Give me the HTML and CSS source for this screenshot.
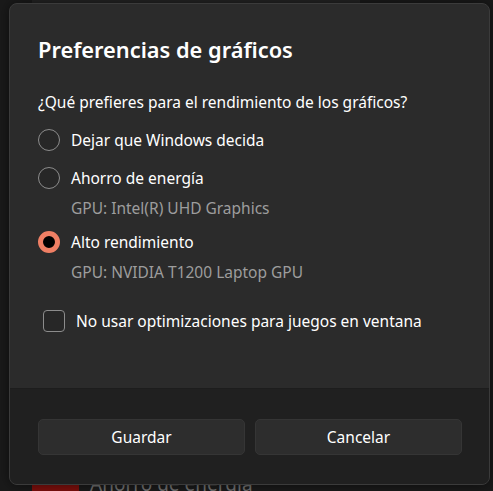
FILE: index.html
```html
<!DOCTYPE html>
<html lang="es">
<head>
  <meta charset="UTF-8">
  <title>Preferencias de gráficos</title>
  <link rel="stylesheet" href="styles.css">
</head>
<body>

  <div class="page">
    <div class="page-card"></div>
    <div class="page-row">
      <span class="app-icon"></span>
      <span class="page-row-text">Ahorro de energía</span>
    </div>
  </div>

  <div class="dialog">
    <div class="dialog-body">
      <h2 class="dialog-title">Preferencias de gráficos</h2>
      <p class="question">¿Qué prefieres para el rendimiento de los gráficos?</p>

      <form class="options">
        <label class="option">
          <input type="radio" name="gpu" value="auto">
          <span class="radio"></span>
          <span>Dejar que Windows decida</span>
        </label>
        <label class="option">
          <input type="radio" name="gpu" value="power">
          <span class="radio"></span>
          <span>Ahorro de energía</span>
        </label>
        <div class="note">GPU: Intel(R) UHD Graphics</div>
        <label class="option">
          <input type="radio" name="gpu" value="high" checked>
          <span class="radio"></span>
          <span>Alto rendimiento</span>
        </label>
        <div class="note">GPU: NVIDIA T1200 Laptop GPU</div>

        <label class="check">
          <input type="checkbox" name="windowed">
          <span class="box"></span>
          <span>No usar optimizaciones para juegos en ventana</span>
        </label>
      </form>
    </div>

    <div class="dialog-footer">
      <button type="button">Guardar</button>
      <button type="button">Cancelar</button>
    </div>
  </div>

</body>
</html>
```

FILE: styles.css
```css
body {
  margin: 0;
  font-family: 'Noto Sans', 'Open Sans', sans-serif;
  background-color: #1a1a1a;
  color: #fff;
  overflow: hidden;
}

/* window behind the dialog */
.page {
  height: 100vh;
  display: flex;
  flex-direction: column;
  justify-content: space-between;
}

.page-card {
  margin-left: 32px;
  width: 328px;
  height: 4px;
  background: #232323;
}

.page-row {
  display: flex;
  align-items: flex-end;
  gap: 11px;
  padding-left: 32px;
  height: 24px;
  margin-bottom: -6px;
}

.app-icon {
  width: 47px;
  height: 30px;
  background: #7c0f0c;
}

.page-row-text {
  font-size: 19px;
  color: #6f6f6f;
  line-height: 26px;
}

/* dialog */
.dialog {
  position: absolute;
  left: 9px;
  top: 3px;
  width: 479px;
  height: 480px;
  border: 1px solid #3b3b3b;
  border-radius: 8px;
  background: #2b2b2b;
  overflow: hidden;
  display: flex;
  flex-direction: column;
  box-shadow: 0 0 12px rgba(0, 0, 0, 0.5);
}

.dialog-body {
  flex: 1;
  padding: 31px 28px 0 28px;
}

.dialog-title {
  margin: 0;
  font-size: 21.8px;
  font-weight: 600;
  line-height: 30px;
}

.question {
  margin: 27px 0 0;
  font-size: 15.5px;
  line-height: 20px;
}

.options {
  display: flex;
  flex-direction: column;
  margin-top: 16px;
}

.option,
.check {
  display: flex;
  align-items: center;
  gap: 11px;
  height: 24px;
  font-size: 15.5px;
  cursor: pointer;
}

.option input,
.check input {
  display: none;
}

.option + .option {
  margin-top: 14px;
}

.note + .option {
  margin-top: 12px;
}

.radio {
  box-sizing: border-box;
  width: 22px;
  height: 22px;
  border-radius: 50%;
  border: 1.5px solid #8c8c8c;
  background: #272727;
}

.option input:checked + .radio {
  border: 5.5px solid #ef7f64;
  background: #000;
}

.note {
  margin-top: 8px;
  padding-left: 33px;
  font-size: 15.5px;
  line-height: 20px;
  color: #9d9d9d;
}

.check {
  margin-top: 27px;
  margin-left: 5px;
}

.box {
  box-sizing: border-box;
  width: 22px;
  height: 22px;
  border-radius: 4px;
  border: 1px solid #8c8c8c;
  background: #272727;
}

.dialog-footer {
  height: 96px;
  box-sizing: border-box;
  padding: 30px 27px 29px 28px;
  background: #202020;
  border-top: 1px solid #1d1d1d;
  display: grid;
  grid-template-columns: 1fr 1fr;
  gap: 10px;
}

.dialog-footer button {
  font-family: inherit;
  font-size: 15.5px;
  color: #fff;
  background: #2d2d2d;
  border: 1px solid #353535;
  border-radius: 5px;
  cursor: pointer;
}

.dialog-footer button:hover {
  background: #323232;
}
```
